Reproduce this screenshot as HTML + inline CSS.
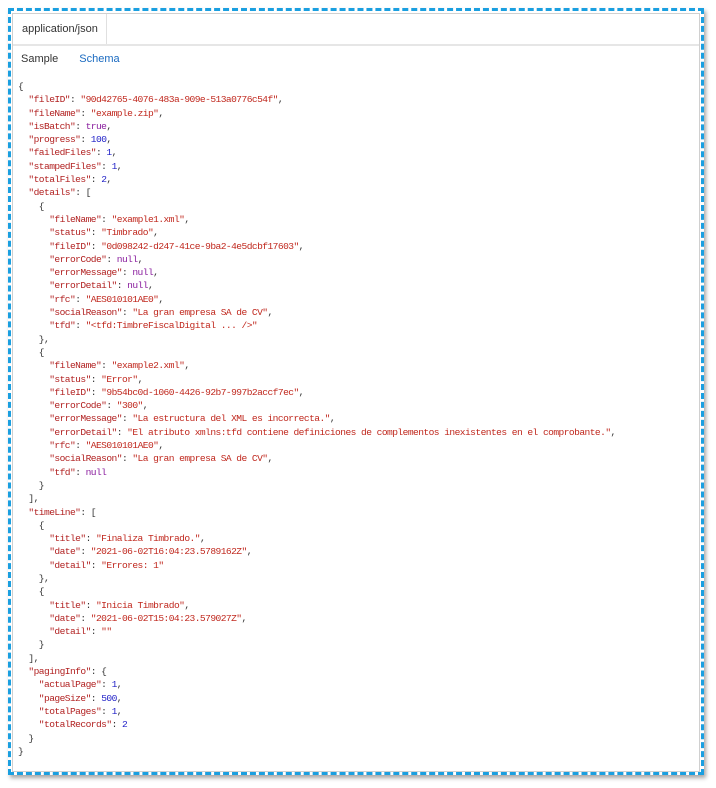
<!DOCTYPE html>
<html><head><meta charset="utf-8"><style>
html,body{margin:0;padding:0;background:#fff;width:716px;height:788px;overflow:hidden}
.outer{position:absolute;left:8px;top:8px;width:696px;height:767px;border:3px dashed #1a9fe0;box-sizing:border-box;box-shadow:2px 3px 4px rgba(0,0,0,.35)}
.inner{position:absolute;left:12px;top:13px;width:688px;height:759px;border:1px solid #d0d0d0;box-sizing:border-box;background:#fff}
.tabbar{position:absolute;left:0;top:0;right:0;height:30px;border-bottom:2px solid #e6e6e6}
.tab{position:absolute;left:0;top:0;width:94px;height:30px;border-right:1px solid #e0e0e0;font:11px "Liberation Sans",sans-serif;color:#333;line-height:31px;padding-left:9px;box-sizing:border-box}
.links{position:absolute;top:39px;left:8px;font:11px "Liberation Sans",sans-serif;color:#333}
.links span{color:#1a6ac0;margin-left:21px}
pre{position:absolute;left:5px;top:66px;margin:0;font:9.6px/13.3px "Liberation Mono",monospace;letter-spacing:-0.56px;color:#333}
.k{color:#b22222}.s{color:#c0281e}.n{color:#2323c8}.b{color:#8a1e9e}
</style></head><body>
<div class="outer"></div>
<div class="inner">
<div class="tabbar"><div class="tab">application/json</div></div>
<div class="links">Sample<span>Schema</span></div>
<pre>{
  <span class="k">"fileID"</span>: <span class="s">"90d42765-4076-483a-909e-513a0776c54f"</span>,
  <span class="k">"fileName"</span>: <span class="s">"example.zip"</span>,
  <span class="k">"isBatch"</span>: <span class="b">true</span>,
  <span class="k">"progress"</span>: <span class="n">100</span>,
  <span class="k">"failedFiles"</span>: <span class="n">1</span>,
  <span class="k">"stampedFiles"</span>: <span class="n">1</span>,
  <span class="k">"totalFiles"</span>: <span class="n">2</span>,
  <span class="k">"details"</span>: [
    {
      <span class="k">"fileName"</span>: <span class="s">"example1.xml"</span>,
      <span class="k">"status"</span>: <span class="s">"Timbrado"</span>,
      <span class="k">"fileID"</span>: <span class="s">"0d098242-d247-41ce-9ba2-4e5dcbf17603"</span>,
      <span class="k">"errorCode"</span>: <span class="b">null</span>,
      <span class="k">"errorMessage"</span>: <span class="b">null</span>,
      <span class="k">"errorDetail"</span>: <span class="b">null</span>,
      <span class="k">"rfc"</span>: <span class="s">"AES010101AE0"</span>,
      <span class="k">"socialReason"</span>: <span class="s">"La gran empresa SA de CV"</span>,
      <span class="k">"tfd"</span>: <span class="s">"&lt;tfd:TimbreFiscalDigital ... /&gt;"</span>
    },
    {
      <span class="k">"fileName"</span>: <span class="s">"example2.xml"</span>,
      <span class="k">"status"</span>: <span class="s">"Error"</span>,
      <span class="k">"fileID"</span>: <span class="s">"9b54bc0d-1060-4426-92b7-997b2accf7ec"</span>,
      <span class="k">"errorCode"</span>: <span class="s">"300"</span>,
      <span class="k">"errorMessage"</span>: <span class="s">"La estructura del XML es incorrecta."</span>,
      <span class="k">"errorDetail"</span>: <span class="s">"El atributo xmlns:tfd contiene definiciones de complementos inexistentes en el comprobante."</span>,
      <span class="k">"rfc"</span>: <span class="s">"AES010101AE0"</span>,
      <span class="k">"socialReason"</span>: <span class="s">"La gran empresa SA de CV"</span>,
      <span class="k">"tfd"</span>: <span class="b">null</span>
    }
  ],
  <span class="k">"timeLine"</span>: [
    {
      <span class="k">"title"</span>: <span class="s">"Finaliza Timbrado."</span>,
      <span class="k">"date"</span>: <span class="s">"2021-06-02T16:04:23.5789162Z"</span>,
      <span class="k">"detail"</span>: <span class="s">"Errores: 1"</span>
    },
    {
      <span class="k">"title"</span>: <span class="s">"Inicia Timbrado"</span>,
      <span class="k">"date"</span>: <span class="s">"2021-06-02T15:04:23.579027Z"</span>,
      <span class="k">"detail"</span>: <span class="s">""</span>
    }
  ],
  <span class="k">"pagingInfo"</span>: {
    <span class="k">"actualPage"</span>: <span class="n">1</span>,
    <span class="k">"pageSize"</span>: <span class="n">500</span>,
    <span class="k">"totalPages"</span>: <span class="n">1</span>,
    <span class="k">"totalRecords"</span>: <span class="n">2</span>
  }
}</pre>
</div>
</body></html>
